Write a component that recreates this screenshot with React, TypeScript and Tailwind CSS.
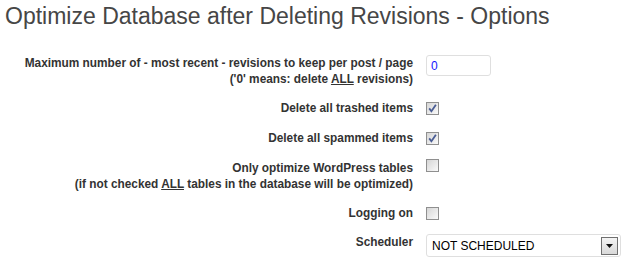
import * as React from 'react'

function Box({ checked }: { checked?: boolean }) {
  return (
    <span className="flex h-[13px] w-[13px] items-center justify-center border border-[#8f8f8f] bg-linear-to-br from-[#d6d6d6] to-[#fafafa]">
      {checked && (
        <svg width="11" height="11" viewBox="0 0 11 11">
          <path d="M2.2 5.4 L4.4 8.2 L8.9 1.8" fill="none" stroke="#4a5d94" strokeWidth="1.8" />
        </svg>
      )}
    </span>
  )
}

function Row({ label, className, top, children }: {
  label: React.ReactNode
  className?: string
  top?: boolean
  children: React.ReactNode
}) {
  return (
    <div className={`flex ${top ? 'items-start' : 'items-center'} ${className ?? ''}`}>
      <div className="w-[413px] text-right text-[11.85px] font-bold leading-4 text-[#333]">{label}</div>
      <div className="ml-[13px] flex">{children}</div>
    </div>
  )
}

export default function App() {
  return (
    <div className="h-[264px] w-[626px] overflow-hidden bg-white font-['Liberation_Sans',Arial,sans-serif]">
      <h2 className="pl-[5px] pt-[2px] text-[23px] leading-[29px] text-[#464646]">
        Optimize Database after Deleting Revisions - Options
      </h2>

      <div className="mt-[24px] flex flex-col">
        <Row top label={<>
          Maximum number of - most recent - revisions to keep per post / page<br />
          ('0' means: delete <span className="underline">ALL</span> revisions)
        </>}>
          <div className="flex h-[21px] w-[65px] items-center rounded-[3px] border border-[#dfdfdf] bg-white pl-[4px] text-[12px] text-[#1515ff]">
            0
          </div>
        </Row>

        <Row className="mt-[13px]" label="Delete all trashed items">
          <Box checked />
        </Row>

        <Row className="mt-[14px]" label="Delete all spammed items">
          <Box checked />
        </Row>

        <Row top className="mt-[14px]" label={<>
          Only optimize WordPress tables<br />
          (if not checked <span className="underline">ALL</span> tables in the database will be optimized)
        </>}>
          <div className="-mt-px">
            <Box />
          </div>
        </Row>

        <Row className="mt-[13px]" label="Logging on">
          <Box />
        </Row>

        <Row top className="mt-[13px]" label="Scheduler">
          <div className="flex h-[23px] w-[195px] items-center justify-between rounded-[3px] border border-[#dfdfdf] bg-white pl-[5px] pr-[2px] text-[12px] text-black">
            <span>NOT SCHEDULED</span>
            <span className="flex h-[18px] w-[17px] items-center justify-center border border-[#707070] bg-linear-to-b from-[#f4f4f4] to-[#d9d9d9]">
              <svg width="7" height="4" viewBox="0 0 7 4">
                <path d="M0 0 H7 L3.5 4 Z" fill="#111" />
              </svg>
            </span>
          </div>
        </Row>
      </div>
    </div>
  )
}
